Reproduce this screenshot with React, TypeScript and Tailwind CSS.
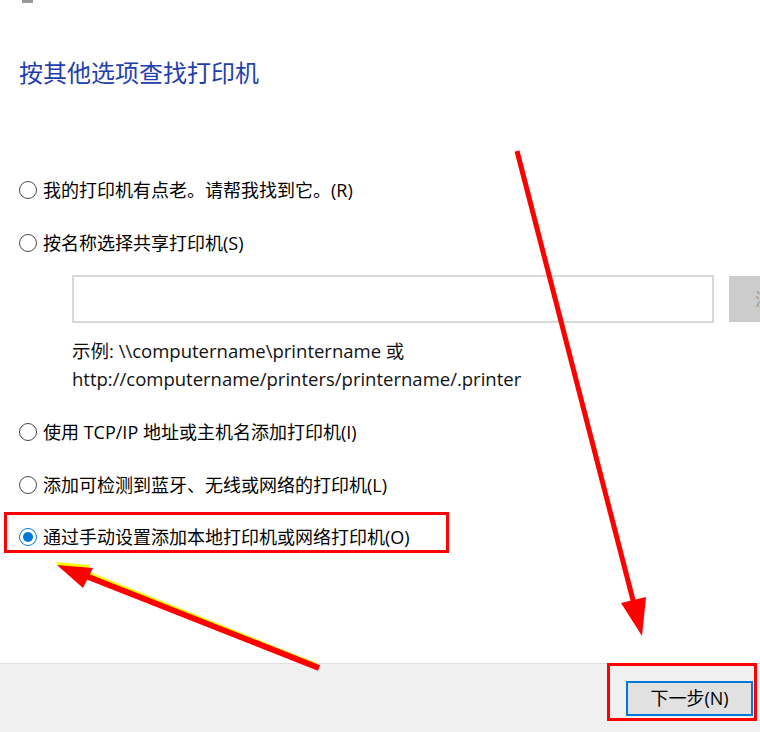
import { useState } from 'react';

const options = [
    { id: 'old', label: '我的打印机有点老。请帮我找到它。(R)' },
    { id: 'shared', label: '按名称选择共享打印机(S)' },
    { id: 'tcp', label: '使用 TCP/IP 地址或主机名添加打印机(I)' },
    { id: 'bt', label: '添加可检测到蓝牙、无线或网络的打印机(L)' },
    { id: 'manual', label: '通过手动设置添加本地打印机或网络打印机(O)' },
];

function Radio({ checked }: { checked: boolean }) {
    return (
        <span
            className={`flex h-[18px] w-[18px] shrink-0 items-center justify-center rounded-full border-[1.5px] bg-white ${
                checked ? 'border-[#0078d7]' : 'border-[#4a4a4a]'
            }`}
        >
            {checked && <span className="h-[10px] w-[10px] rounded-full bg-[#0078d7]" />}
        </span>
    );
}

function Option({ label, checked, onSelect }: { label: string; checked: boolean; onSelect: () => void }) {
    return (
        <button type="button" onClick={onSelect} className="flex h-[26px] items-center gap-[6px] text-left">
            <Radio checked={checked} />
            <span className="whitespace-nowrap text-[18px] leading-[26px] text-black">{label}</span>
        </button>
    );
}

function Annotations() {
    return (
        <svg className="pointer-events-none absolute left-0 top-0" width="760" height="732" viewBox="0 0 760 732">
            {/* arrow down to the next button */}
            <line x1="517" y1="151" x2="634" y2="604" stroke="#ff0000" strokeWidth="5" />
            <polygon points="621,603 646,597 642,636" fill="#ff0000" />
            {/* arrow up to the manual option */}
            <line x1="316" y1="666" x2="84" y2="573" stroke="#ffff00" strokeWidth="6" />
            <polygon points="55,562 90,565 81,585" fill="#ffff00" />
            <line x1="319" y1="668" x2="86" y2="576" stroke="#ff0000" strokeWidth="6" />
            <polygon points="57,565 93,568 83,588" fill="#ff0000" />
        </svg>
    );
}

export default function App() {
    const [selected, setSelected] = useState('manual');

    return (
        <div
            className="relative flex h-[732px] w-[760px] flex-col overflow-hidden bg-white"
            style={{ fontFamily: '"Open Sans", "Noto Sans CJK SC", sans-serif' }}
        >
            <div className="flex-1">
                <div className="ml-[22px] h-[3px] w-[11px] bg-[#9a9a9a]" />

                <h1 className="ml-[19px] mt-[53px] text-[24px] font-normal leading-[34px] text-[#1f3fae]">
                    按其他选项查找打印机
                </h1>

                <div className="ml-[19px] mt-[87px] flex flex-col">
                    <Option label={options[0].label} checked={selected === 'old'} onSelect={() => setSelected('old')} />
                    <div className="mt-[27px]">
                        <Option
                            label={options[1].label}
                            checked={selected === 'shared'}
                            onSelect={() => setSelected('shared')}
                        />
                    </div>

                    <div className="ml-[53px] mt-[19px] flex items-start gap-[15px]">
                        <input
                            type="text"
                            className="h-[48px] w-[642px] shrink-0 border-2 border-[#d9d9d9] bg-white px-2 text-[18px] outline-none"
                        />
                        <div className="mt-px flex h-[46px] w-[100px] shrink-0 items-center whitespace-nowrap bg-[#cccccc] pl-[26px] text-[18px] text-[#9a9a9a]">
                            浏览(R)...
                        </div>
                    </div>

                    <div className="ml-[53px] mt-[14px] text-[18.5px] leading-[28px] text-[#111111]">
                        <div>示例: \\computername\printername 或</div>
                        <div>http://computername/printers/printername/.printer</div>
                    </div>

                    <div className="mt-[26px]">
                        <Option label={options[2].label} checked={selected === 'tcp'} onSelect={() => setSelected('tcp')} />
                    </div>
                    <div className="mt-[27px]">
                        <Option label={options[3].label} checked={selected === 'bt'} onSelect={() => setSelected('bt')} />
                    </div>
                </div>

                <div className="ml-[4px] mt-[14px] h-[41px] w-[445px] border-[3px] border-[#ff0000] pl-[12px] pt-[9px]">
                    <Option
                        label={options[4].label}
                        checked={selected === 'manual'}
                        onSelect={() => setSelected('manual')}
                    />
                </div>
            </div>

            <div className="flex h-[69px] shrink-0 justify-end border-t border-[#dfdfdf] bg-[#f0f0f0] pr-[3px]">
                <div className="-mt-px h-[58px] w-[150px] border-[3px] border-[#ff0000] pl-[16px] pr-px pt-[15px]">
                    <button
                        type="button"
                        className="flex h-[35px] w-full items-center justify-center border-2 border-[#0078d7] bg-[#e1e1e1] text-[18px] text-black"
                    >
                        下一步(N)
                    </button>
                </div>
            </div>

            <Annotations />
        </div>
    );
}
